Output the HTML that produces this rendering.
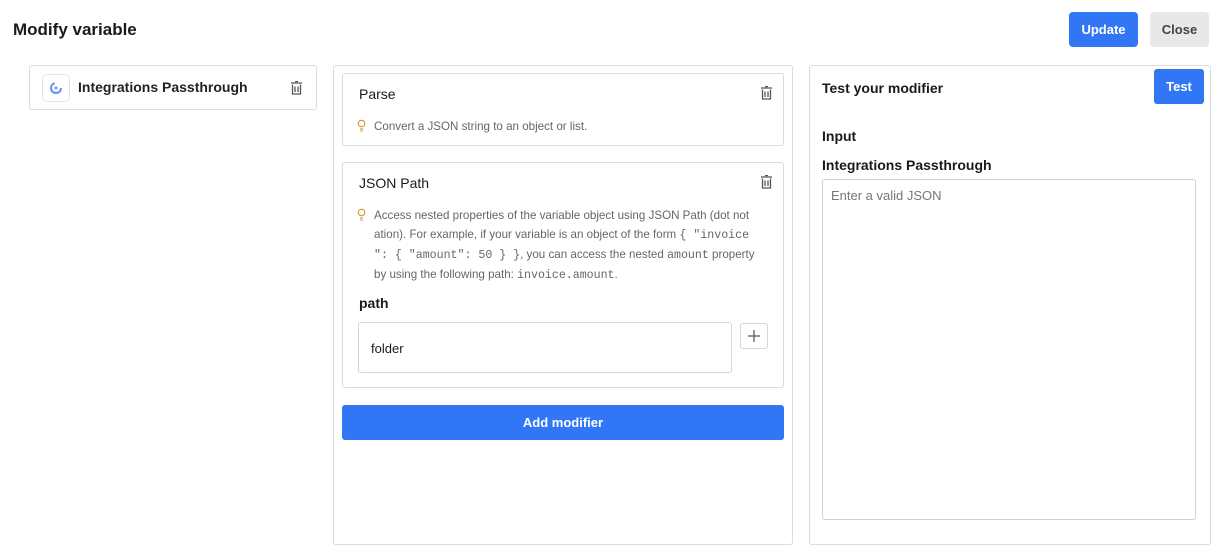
<!DOCTYPE html>
<html><head><style>
*{box-sizing:border-box;margin:0;padding:0}
body{width:1222px;height:533px;overflow:hidden;background:#fff;font-family:"Liberation Sans",sans-serif;color:#1a1a1a;position:relative}
.a{position:absolute}
.btn{position:absolute;border-radius:4px;font-size:13px;font-weight:bold;display:flex;align-items:center;justify-content:center}
.box{position:absolute;border:1px solid #dcdcdc;border-radius:3px;background:#fff}
.hint{font-size:11.6px;color:#666;line-height:19px}
code{font-family:"Liberation Mono",monospace;font-size:11.6px;color:#666}
</style></head><body>
<div class="a" style="left:13px;top:20px;font-size:17px;font-weight:bold">Modify variable</div>
<div class="btn" style="left:1069px;top:12px;width:69px;height:35px;background:#3177f5;color:#fff">Update</div>
<div class="btn" style="left:1150px;top:12px;width:59px;height:35px;background:#e8e8e8;color:#444">Close</div>

<div class="box" style="left:29px;top:65px;width:288px;height:45px">
 <div class="a" style="left:12px;top:8px;width:28px;height:28px;border:1px solid #dde3f0;border-radius:5px"><svg width="28" height="28" class="a" style="left:-1px;top:-1px"><circle cx="14" cy="14" r="5" fill="none" stroke="#6a9af0" stroke-width="2.2" stroke-dasharray="22 10"/><circle cx="14" cy="14" r="1.5" fill="#6a9af0"/></svg></div>
 <div class="a" style="left:48px;top:13px;font-size:14px;font-weight:bold;color:#222">Integrations Passthrough</div>
 <svg class="a" style="left:261px;top:15px" width="11" height="14" viewBox="0 0 11 14"><path d="M0 2h11M4 0.5h3M1.5 3.5v9.5h8v-9.5M4 5.5v5.5M7 5.5v5.5" stroke="#555" stroke-width="1.3" fill="none"/></svg>
</div>

<div class="a" style="left:333px;top:65px;width:460px;height:480px;border:1px solid #dcdcdc;border-radius:3px"></div>
<div class="box" style="left:342px;top:73px;width:442px;height:73px">
 <div class="a" style="left:16px;top:12px;font-size:14px">Parse</div>
 <svg class="a" style="left:418px;top:12px" width="11" height="14" viewBox="0 0 11 14"><path d="M0 2h11M4 0.5h3M1.5 3.5v9.5h8v-9.5M4 5.5v5.5M7 5.5v5.5" stroke="#555" stroke-width="1.3" fill="none"/></svg>
 <svg class="a" style="left:14px;top:45px" width="9" height="13" viewBox="0 0 9 13"><circle cx="4.5" cy="4.5" r="3.3" fill="none" stroke="#d08a1a" stroke-width="1"/><path d="M3 10h3M3.3 12h2.4" stroke="#d08a1a" stroke-width="1"/></svg>
 <div class="a hint" style="left:31px;top:43px">Convert a JSON string to an object or list.</div>
</div>
<div class="box" style="left:342px;top:162px;width:442px;height:226px">
 <div class="a" style="left:16px;top:12px;font-size:14px">JSON Path</div>
 <svg class="a" style="left:418px;top:12px" width="11" height="14" viewBox="0 0 11 14"><path d="M0 2h11M4 0.5h3M1.5 3.5v9.5h8v-9.5M4 5.5v5.5M7 5.5v5.5" stroke="#555" stroke-width="1.3" fill="none"/></svg>
 <svg class="a" style="left:14px;top:45px" width="9" height="13" viewBox="0 0 9 13"><circle cx="4.5" cy="4.5" r="3.3" fill="none" stroke="#d08a1a" stroke-width="1"/><path d="M3 10h3M3.3 12h2.4" stroke="#d08a1a" stroke-width="1"/></svg>
 <div class="a hint" style="left:31px;top:43px;width:405px;white-space:nowrap">Access nested properties of the variable object using JSON Path (dot not<br>ation). For example, if your variable is an object of the form <code>{ "invoice</code><br><code>": { "amount": 50 } }</code>, you can access the nested <code>amount</code> property<br>by using the following path: <code>invoice.amount</code>.</div>
 <div class="a" style="left:16px;top:132px;font-size:14px;font-weight:bold">path</div>
 <div class="a" style="left:15px;top:159px;width:374px;height:51px;border:1px solid #d5d5d5;border-radius:3px;font-size:13px;padding:18px 12px">folder</div>
 <div class="a" style="left:397px;top:160px;width:28px;height:26px;border:1px solid #d5d5d5;border-radius:3px"><svg width="28" height="26" class="a" style="left:-1px;top:-1px"><path d="M14 7v12M8 13h12" stroke="#555" stroke-width="1.2"/></svg></div>
</div>
<div class="btn" style="left:342px;top:405px;width:442px;height:35px;background:#3177f5;color:#fff;font-weight:bold;font-size:13px;border-radius:3px">Add modifier</div>

<div class="a" style="left:809px;top:65px;width:402px;height:480px;border:1px solid #dcdcdc;border-radius:3px"></div>
<div class="a" style="left:822px;top:80px;font-size:14px;font-weight:bold">Test your modifier</div>
<div class="btn" style="left:1154px;top:69px;width:50px;height:35px;background:#3177f5;color:#fff;border-radius:3px">Test</div>
<div class="a" style="left:822px;top:128px;font-size:14px;font-weight:bold">Input</div>
<div class="a" style="left:822px;top:157px;font-size:14px;font-weight:bold">Integrations Passthrough</div>
<div class="a" style="left:822px;top:179px;width:374px;height:341px;border:1px solid #d0d0d0;border-radius:3px;font-size:13px;color:#777;padding:8px 8px">Enter a valid JSON</div>
</body></html>
